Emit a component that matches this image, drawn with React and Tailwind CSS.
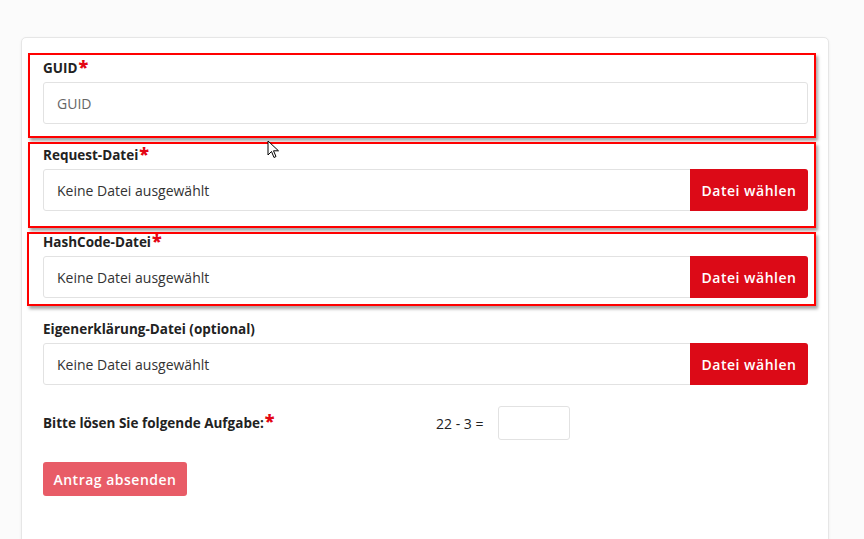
import React from "react";

function Label({ children, required }) {
  return (
    <div className="h-[20px] flex items-center text-[13.5px] font-bold text-[#222]">
      <span>{children}</span>
      {required && <span className="text-[#e30613] text-[18px] font-extrabold leading-none ml-[1px] -mt-[4px]">*</span>}
    </div>
  );
}

function FileInput() {
  return (
    <div className="mt-[4px] h-[42px] flex border border-[#e2e2e2] rounded-[3px] bg-white">
      <div className="flex-1 flex items-center pl-[13px] text-[14px] text-[#333]">Keine Datei ausgewählt</div>
      <div className="w-[118px] -my-[1px] -mr-[1px] bg-[#dc0a17] text-white text-[14px] font-semibold tracking-[0.5px] flex items-center justify-center rounded-r-[3px]">
        Datei wählen
      </div>
    </div>
  );
}

function RedBox({ cls }) {
  return (
    <div className={"absolute border-[2px] border-[#ff0000] shadow-[2px_3px_3px_rgba(0,0,0,0.35)] pointer-events-none " + cls} />
  );
}

export default function App() {
  return (
    <div
      className="w-[864px] h-[539px] overflow-hidden bg-[#fbfbfb] relative"
      style={{ fontFamily: '"Open Sans", "Noto Sans", sans-serif' }}
    >
      <div className="ml-[21px] mt-[37px] w-[808px] h-[560px] bg-white border border-[#e6e6e6] rounded-[5px] shadow-[0_1px_3px_rgba(0,0,0,0.06)] pl-[21px] pr-[20px] pt-[20px]">
        <div className="relative mb-[21px]">
          <Label required>GUID</Label>
          <div className="mt-[4px] h-[42px] border border-[#e2e2e2] rounded-[3px] flex items-center pl-[13px] text-[14px] text-[#666]">GUID</div>
          <RedBox cls="-left-[15px] -right-[8px] -top-[5px] -bottom-[14px]" />
        </div>
        <div className="relative mb-[21px]">
          <Label required>Request-Datei</Label>
          <FileInput />
          <RedBox cls="-left-[15px] -right-[8px] -top-[3px] -bottom-[17px]" />
        </div>
        <div className="relative mb-[21px]">
          <Label required>HashCode-Datei</Label>
          <FileInput />
          <RedBox cls="-left-[16px] -right-[8px] top-[0px] -bottom-[8px]" />
        </div>
        <div className="mb-[21px]">
          <Label>Eigenerklärung-Datei (optional)</Label>
          <FileInput />
        </div>
        <div className="flex items-center h-[34px]">
          <div className="w-[393px] flex items-center text-[13.5px] font-bold text-[#222]">
            <span>Bitte lösen Sie folgende Aufgabe:</span>
            <span className="text-[#e30613] text-[18px] font-extrabold leading-none ml-[1px] -mt-[6px]">*</span>
          </div>
          <div className="text-[14px] text-[#222] w-[62px]">22 - 3 =</div>
          <div className="w-[72px] h-[34px] border border-[#e2e2e2] rounded-[3px] bg-white" />
        </div>
        <div className="mt-[22px]">
          <div className="inline-flex items-center justify-center w-[144px] h-[34px] bg-[#e85c67] text-white text-[14px] font-semibold rounded-[3px] tracking-[0.5px]">
            Antrag absenden
          </div>
        </div>
      </div>
      <svg className="absolute left-[267px] top-[140px]" width="14" height="20" viewBox="0 0 14 20">
        <path d="M1 1 L1 15 L4.5 11.5 L7 17.5 L9 16.5 L6.5 10.8 L11.5 10.8 Z" fill="#fff" stroke="#000" strokeWidth="1" strokeLinejoin="round" />
      </svg>
    </div>
  );
}
